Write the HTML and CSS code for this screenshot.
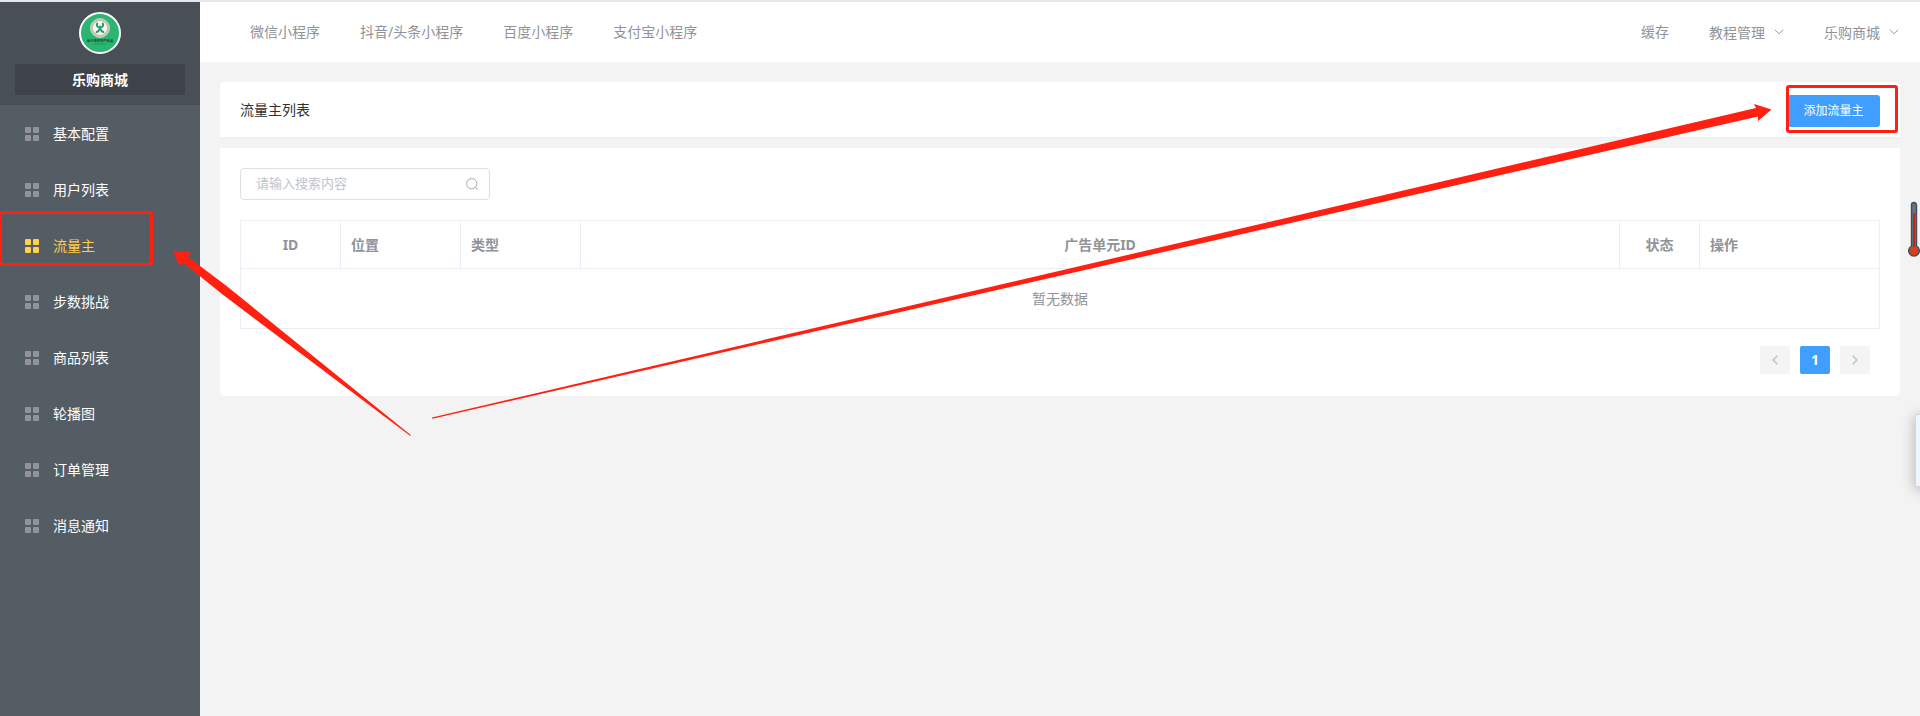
FILE: index.html
```html
<!DOCTYPE html>
<html lang="zh-CN">
<head>
<meta charset="utf-8">
<title>流量主列表</title>
<link rel="stylesheet" href="styles.css">
</head>
<body>
<div class="app">
  <aside class="sidebar">
    <div class="brand">
      <svg class="logo" viewBox="0 0 42 42">
        <circle cx="21" cy="21" r="20" fill="#2bb573" stroke="#fff" stroke-width="2"/>
        <circle cx="21" cy="16" r="8.2" fill="#f4f6f2" stroke="#c9bfae" stroke-width="2.2"/>
        <circle cx="21" cy="16" r="9.5" fill="none" stroke="#e9e4da" stroke-width=".7"/>
        <path d="M18.500 10.800C17 13.500 18.500 15.500 21 15.500C23.500 15.500 25 13.500 23.500 10.800M16.800 20.300C19.500 20.300 20.200 18.500 21 15.800C21.800 18.500 22.500 20.300 25.200 20.300" fill="none" stroke="#1d9a68" stroke-width="1.900"/>
        <text x="21" y="30" class="logo-text" text-anchor="middle">长沙市房地产商会</text>
        <path d="M14.500 32h13" stroke="#1f7f55" stroke-width=".6"/>
      </svg>
      <div class="shop">乐购商城</div>
    </div>
    <nav class="menu">
      <a class="item"><i class="grid"><b></b><b></b><b></b><b></b></i>基本配置</a>
      <a class="item"><i class="grid"><b></b><b></b><b></b><b></b></i>用户列表</a>
      <a class="item active"><i class="grid"><b></b><b></b><b></b><b></b></i>流量主</a>
      <a class="item"><i class="grid"><b></b><b></b><b></b><b></b></i>步数挑战</a>
      <a class="item"><i class="grid"><b></b><b></b><b></b><b></b></i>商品列表</a>
      <a class="item"><i class="grid"><b></b><b></b><b></b><b></b></i>轮播图</a>
      <a class="item"><i class="grid"><b></b><b></b><b></b><b></b></i>订单管理</a>
      <a class="item"><i class="grid"><b></b><b></b><b></b><b></b></i>消息通知</a>
    </nav>
  </aside>
  <div class="main">
    <header class="topbar">
      <nav class="tabs"><a>微信小程序</a><a>抖音/头条小程序</a><a>百度小程序</a><a>支付宝小程序</a></nav>
      <nav class="tools">
        <a>缓存</a>
        <a class="drop"><span>教程管理</span><svg class="caret" viewBox="0 0 10 6"><path d="M.8.8L5 4.800L9.200.8"/></svg></a>
        <a class="drop"><span>乐购商城</span><svg class="caret" viewBox="0 0 10 6"><path d="M.8.8L5 4.800L9.200.8"/></svg></a>
      </nav>
    </header>
    <section class="card title-card"><h1>流量主列表</h1><button class="add">添加流量主</button></section>
    <section class="card list-card">
      <div class="search"><span>请输入搜索内容</span>
        <svg class="lens" viewBox="0 0 12 12"><circle cx="5.700" cy="5.700" r="5.100"/><path d="M9.300 9.300L11.600 11.500"/></svg>
      </div>
      <div class="table">
        <div class="row"><div class="cell mid">ID</div><div class="cell">位置</div><div class="cell">类型</div><div class="cell mid">广告单元ID</div><div class="cell mid">状态</div><div class="cell">操作</div></div>
        <div class="empty">暂无数据</div>
      </div>
      <div class="pager">
        <span class="page off"><svg viewBox="0 0 6 10"><path d="M5.300.8L1.200 5L5.300 9.200"/></svg></span>
        <span class="page on">1</span>
        <span class="page off"><svg viewBox="0 0 6 10"><path d="M.7.8L4.800 5L.7 9.200"/></svg></span>
      </div>
    </section>
  </div>
</div>
<div class="side-tab"></div>
<svg class="overlay" viewBox="0 0 1920 716">
  <g fill="none" stroke="#ff2012" stroke-width="3">
    <rect x=".5" y="212.500" width="151" height="52" rx="1.500"/>
    <rect x="1787.500" y="86.500" width="109" height="45" rx="1.500"/>
  </g>
  <g fill="#ff2012">
    <path d="M173 251L190.500 252.300L188 257L225 284.800L411 435.200L410 435.800L222 294L183 262.500L179.500 266Z"/>
    <path d="M1771.500 109.500L1754 104L1756 108L1600 144.500L432 417.500L432.300 418.700L1600 152.500L1758 116.500L1758 121Z"/>
  </g>
  <g>
    <path d="M1911.500 205a2.500 2.500 0 0 1 5 0V246a5.300 5.300 0 1 1-5 0Z" fill="#65747e" stroke="#3f4d57" stroke-width="1.400"/>
    <path d="M1914 213V247" stroke="#cc2012" stroke-width="2"/>
    <circle cx="1914" cy="251" r="4.200" fill="#e03c14"/>
  </g>
</svg>
</body>
</html>
```

FILE: styles.css
```css
* { box-sizing: border-box; }
body {
  margin: 0;
  height: 716px;
  overflow: hidden;
  position: relative;
  background: #f3f3f3;
  color: #909399;
  font: 14px/20px "Noto Sans", "Noto Sans CJK SC", sans-serif;
}
.app { display: flex; height: 716px; border-top: 2px solid #e7e7ed; }
.sidebar { width: 200px; flex: none; background: #545c64; }
.brand {
  height: 103px;
  padding: 10px 15px 0;
  display: flex;
  flex-direction: column;
  align-items: center;
  gap: 10px;
  background: #484f57;
}
.logo { width: 42px; height: 42px; display: block; }
.logo-text { font-size: 3.3px; font-weight: 700; fill: #14442f; }
.shop {
  width: 170px;
  height: 31px;
  border-radius: 3px;
  background: #3e4249;
  color: #fff;
  font-weight: 700;
  line-height: 32px;
  text-align: center;
}
.menu { padding-top: 1px; }
.item {
  display: flex;
  align-items: center;
  gap: 14px;
  height: 56px;
  padding-left: 25px;
  color: #fff;
}
.grid {
  width: 14px;
  height: 14px;
  display: grid;
  grid-template-columns: 6px 6px;
  grid-template-rows: 6px 6px;
  gap: 2px;
}
.grid b { background: #909399; border-radius: 1px; }
.active { color: #ffd04b; }
.active .grid b { background: #ffd04b; }
.main { flex: 1; display: flex; flex-direction: column; }
.topbar {
  height: 60px;
  display: flex;
  justify-content: space-between;
  align-items: center;
  padding: 0 21px 0 50px;
  background: #fff;
}
.tabs { display: flex; gap: 40px; }
.tools { display: flex; gap: 40px; }
.drop { display: flex; align-items: center; gap: 9px; }
.drop span { padding-top: 1px; }
.caret { width: 10px; height: 6px; fill: none; stroke: #909399; stroke-width: .9; }
.card { background: #fff; margin: 0 20px; }
.title-card {
  height: 56px;
  margin-top: 20px;
  padding: 0 20px;
  display: flex;
  align-items: center;
  justify-content: space-between;
  border-bottom: 1px solid #ebeef5;
  border-radius: 4px 4px 0 0;
}
h1 { margin: 0; font-size: 14px; font-weight: 400; color: #303133; }
.add {
  width: 92px;
  height: 32px;
  margin-top: 3px;
  padding: 0 1px 0 0;
  border: 0;
  border-radius: 3px;
  background: #409eff;
  color: #fff;
  font: 12px/32px "Noto Sans", "Noto Sans CJK SC", sans-serif;
}
.list-card { height: 248px; margin-top: 10px; padding: 20px; border-radius: 0 0 4px 4px; }
.search {
  width: 250px;
  height: 32px;
  padding: 0 11px 0 15px;
  display: flex;
  align-items: center;
  justify-content: space-between;
  border: 1px solid #dcdfe6;
  border-radius: 4px;
  color: #c0c4cc;
  font-size: 13px;
}
.search span { padding-bottom: 3px; }
.lens { width: 12px; height: 12px; fill: none; stroke: #909399; stroke-width: .8; }
.table { margin-top: 20px; border: 1px solid #ebeef5; }
.row {
  display: grid;
  grid-template-columns: 100px 120px 120px 1fr 80px 179px;
  height: 48px;
  border-bottom: 1px solid #ebeef5;
  font-weight: 700;
}
.cell { padding: 0 10px; line-height: 47px; border-right: 1px solid #ebeef5; }
.cell:last-child { border-right: 0; }
.mid { text-align: center; }
.empty { height: 59px; line-height: 60px; text-align: center; }
.pager { display: flex; justify-content: flex-end; gap: 10px; margin-top: 17px; padding-right: 10px; }
.page {
  width: 30px;
  height: 28px;
  display: flex;
  align-items: center;
  justify-content: center;
  border-radius: 2px;
  background: #f4f4f5;
}
.page svg { width: 6px; height: 10px; fill: none; stroke: #c0c4cc; stroke-width: 1.6; }
.on { background: #409eff; color: #fff; font-size: 14px; font-weight: 700; }
.side-tab {
  position: absolute;
  left: 1915px;
  top: 414px;
  width: 20px;
  height: 73px;
  border: 1px solid #d3d7dc;
  border-radius: 2px;
  background: #eef6ff;
  box-shadow: 0 2px 14px rgba(0, 0, 0, .28);
}
.overlay { position: absolute; left: 0; top: 0; width: 1920px; height: 716px; pointer-events: none; }
```
